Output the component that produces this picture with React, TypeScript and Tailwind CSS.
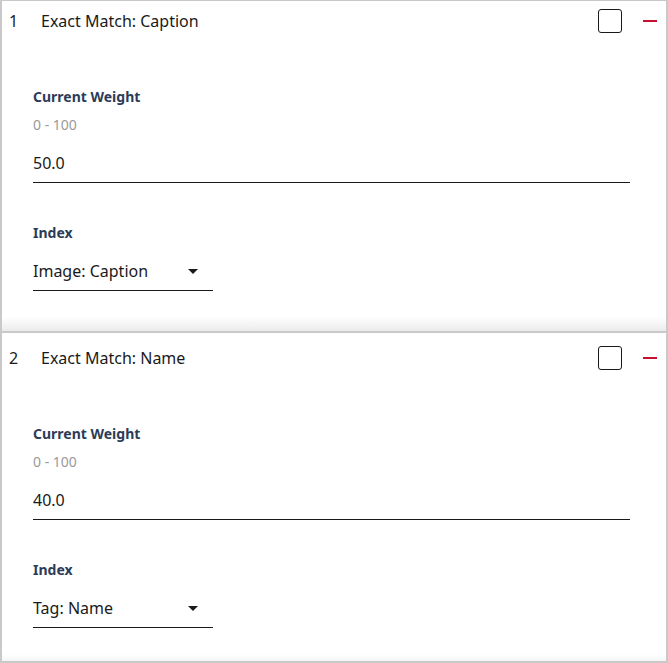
import React from "react";

type Item = { n: number; title: string; weight: string; index: string };

const items: Item[] = [
  { n: 1, title: "Exact Match: Caption", weight: "50.0", index: "Image: Caption" },
  { n: 2, title: "Exact Match: Name", weight: "40.0", index: "Tag: Name" },
];

function Card({ item }: { item: Item }) {
  return (
    <div className="h-[337px] border-b-2 border-[#c9c9c9] bg-[linear-gradient(to_bottom,#ffffff_calc(100%-14px),#ebebeb)] flex flex-col">
      <div className="flex items-center h-[24px] mt-[13px] pl-[7px] pr-[9px]">
        <span className="w-[32px] text-[16px] leading-[24px] text-[#1a1a1a]">{item.n}</span>
        <span className="flex-1 text-[16px] leading-[24px] text-[#1a1a1a]">{item.title}</span>
        <div className="w-[24px] h-[24px] border-[1.5px] border-[#1a1a1a] rounded-[3px] bg-white" />
        <div className="ml-[21px] w-[14px] h-[2px] bg-[#c8102e]" />
      </div>
      <div className="pl-[31px] pr-[36px] flex flex-col">
        <div className="mt-[54px] text-[14px] leading-[20px] font-bold text-[#2c3c58]">Current Weight</div>
        <div className="mt-[8px] text-[14px] leading-[20px] text-[#9a9a9a]">0 - 100</div>
        <div className="mt-[16px] pb-[7px] border-b border-[#1a1a1a] text-[16px] leading-[24px] text-[#1a1a1a]">
          {item.weight}
        </div>
        <div className="mt-[40px] text-[14px] leading-[20px] font-bold text-[#2c3c58]">Index</div>
        <div className="mt-[16px] w-[180px] pb-[7px] border-b border-[#1a1a1a] flex items-center justify-between pr-[15px]">
          <span className="text-[16px] leading-[24px] text-[#1a1a1a]">{item.index}</span>
          <svg width="10" height="5" viewBox="0 0 10 5">
            <path d="M0 0 L10 0 L5 5 Z" fill="#1a1a1a" />
          </svg>
        </div>
      </div>
    </div>
  );
}

export default function App() {
  return (
    <div
      className="w-[668px] h-[663px] overflow-hidden bg-white border-t border-x-2 border-b-2 border-[#c9c9c9]"
      style={{ fontFamily: '"Noto Sans", "Open Sans", sans-serif' }}
    >
      <div className="-mt-[5px]">
        {items.map((it) => (
          <Card key={it.n} item={it} />
        ))}
      </div>
    </div>
  );
}
